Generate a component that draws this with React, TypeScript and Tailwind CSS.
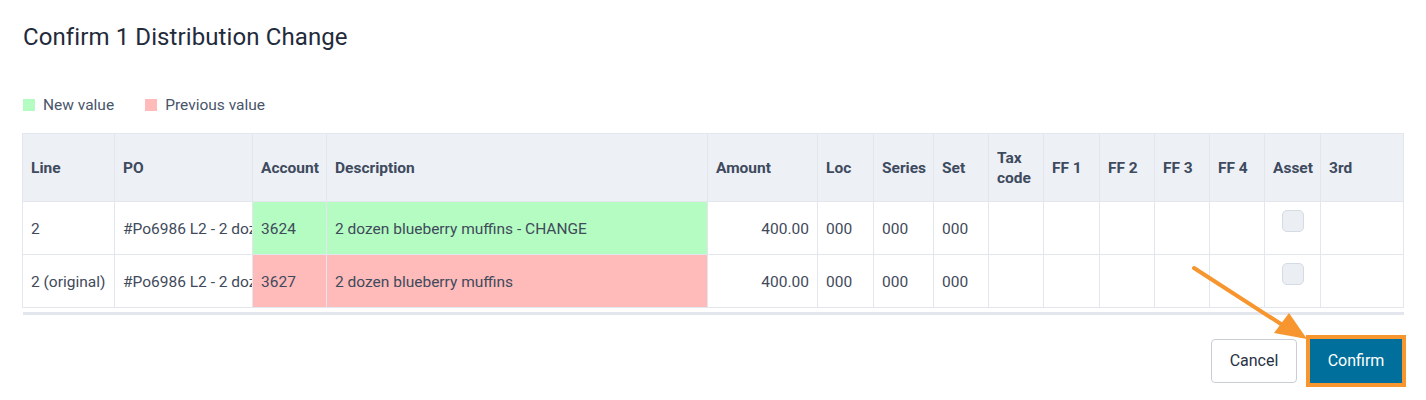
import React from 'react';

type Row = {
  line: string;
  po: string;
  account: string;
  description: string;
  amount: string;
  tone: 'new' | 'old';
};

const ROWS: Row[] = [
  { line: '2', po: '#Po6986 L2 - 2 dozen blueberry muffins', account: '3624', description: '2 dozen blueberry muffins - CHANGE', amount: '400.00', tone: 'new' },
  { line: '2 (original)', po: '#Po6986 L2 - 2 dozen blueberry muffins', account: '3627', description: '2 dozen blueberry muffins', amount: '400.00', tone: 'old' },
];

const COLS = [
  { label: 'Line', w: 'w-[92px]' },
  { label: 'PO', w: 'w-[138px]' },
  { label: 'Account', w: 'w-[74px]' },
  { label: 'Description', w: 'w-[381px]' },
  { label: 'Amount', w: 'w-[110px]' },
  { label: 'Loc', w: 'w-[56px]' },
  { label: 'Series', w: 'w-[60px]' },
  { label: 'Set', w: 'w-[55px]' },
  { label: 'Tax code', w: 'w-[55px]' },
  { label: 'FF 1', w: 'w-[56px]' },
  { label: 'FF 2', w: 'w-[55px]' },
  { label: 'FF 3', w: 'w-[55px]' },
  { label: 'FF 4', w: 'w-[55px]' },
  { label: 'Asset', w: 'w-[56px]' },
  { label: '3rd', w: 'w-[83px]' },
];

const cell = 'border border-[#e3e7ed] px-[8px] pt-[3px] h-[53px] whitespace-nowrap overflow-hidden';

export default function App() {
  return (
    <div className="relative w-[1426px] h-[400px] bg-white pl-[23px] pr-[22px] pt-[20px] font-['Roboto',sans-serif] text-[#3f4a5b]">
      <h1 className="text-[24px] leading-[34px] text-[#1f2b3b] tracking-[0.1px]">Confirm 1 Distribution Change</h1>

      {/* Legend */}
      <div className="flex items-center mt-[40px] text-[15.5px] leading-[22px] text-[#48556a]">
        <span className="w-[12px] h-[12px] bg-[#b5fcc2]" />
        <span className="ml-[8px]">New value</span>
        <span className="w-[12px] h-[12px] bg-[#ffbaba] ml-[31px]" />
        <span className="ml-[8px]">Previous value</span>
      </div>

      {/* Table */}
      <table className="table-fixed border-collapse w-[1382px] mt-[17px] -ml-[1px] text-[15.5px]">
        <thead>
          <tr className="bg-[#edf0f5]">
            {COLS.map(c => (
              <th
                key={c.label}
                className={`${c.w} border border-[#e3e7ed] h-[68px] px-[8px] text-left font-bold text-[15.5px] leading-[20px] text-[#3e4a5e]`}
              >
                {c.label === 'Tax code' ? (
                  <span>Tax<br />code</span>
                ) : c.label}
              </th>
            ))}
          </tr>
        </thead>
        <tbody>
          {ROWS.map(r => {
            const tint = r.tone === 'new' ? 'bg-[#b5fcc2]' : 'bg-[#ffbaba]';
            return (
              <tr key={r.line}>
                <td className={cell}>{r.line}</td>
                <td className={`${cell} text-clip`}>{r.po}</td>
                <td className={`${cell} ${tint}`}>{r.account}</td>
                <td className={`${cell} ${tint}`}>{r.description}</td>
                <td className={`${cell} text-right`}>{r.amount}</td>
                <td className={cell}>000</td>
                <td className={cell}>000</td>
                <td className={cell}>000</td>
                <td className={cell} />
                <td className={cell} />
                <td className={cell} />
                <td className={cell} />
                <td className={cell} />
                <td className={`${cell} align-top !pt-[8px]`}>
                  <div className="mx-auto w-[22px] h-[22px] rounded-[5px] bg-[#ebeff4] border border-[#d3dbe4]" />
                </td>
                <td className={cell} />
              </tr>
            );
          })}
        </tbody>
      </table>
      <div className="h-[3px] w-[1381px] bg-[#e3e7ed] mt-[4px]" />

      {/* Actions */}
      <div className="flex justify-end items-center gap-[13px] mt-[24px] mr-[2px]">
        <button className="w-[86px] h-[44px] rounded-[4px] border border-[#c9ced6] bg-white text-[16px] text-[#273243]">
          Cancel
        </button>
        <button className="w-[92px] h-[44px] bg-[#006f9b] text-white text-[16px] outline-4 outline-[#f7962e]">
          Confirm
        </button>
      </div>

      {/* Annotation arrow */}
      <svg className="absolute left-0 top-0 pointer-events-none" width="1426" height="400" viewBox="0 0 1426 400">
        <line x1="1194" y1="268" x2="1284" y2="326" stroke="#f7962e" strokeWidth="4" strokeLinecap="round" />
        <polygon points="1307,339 1274,333 1289,313" fill="#f7962e" />
      </svg>
    </div>
  );
}
